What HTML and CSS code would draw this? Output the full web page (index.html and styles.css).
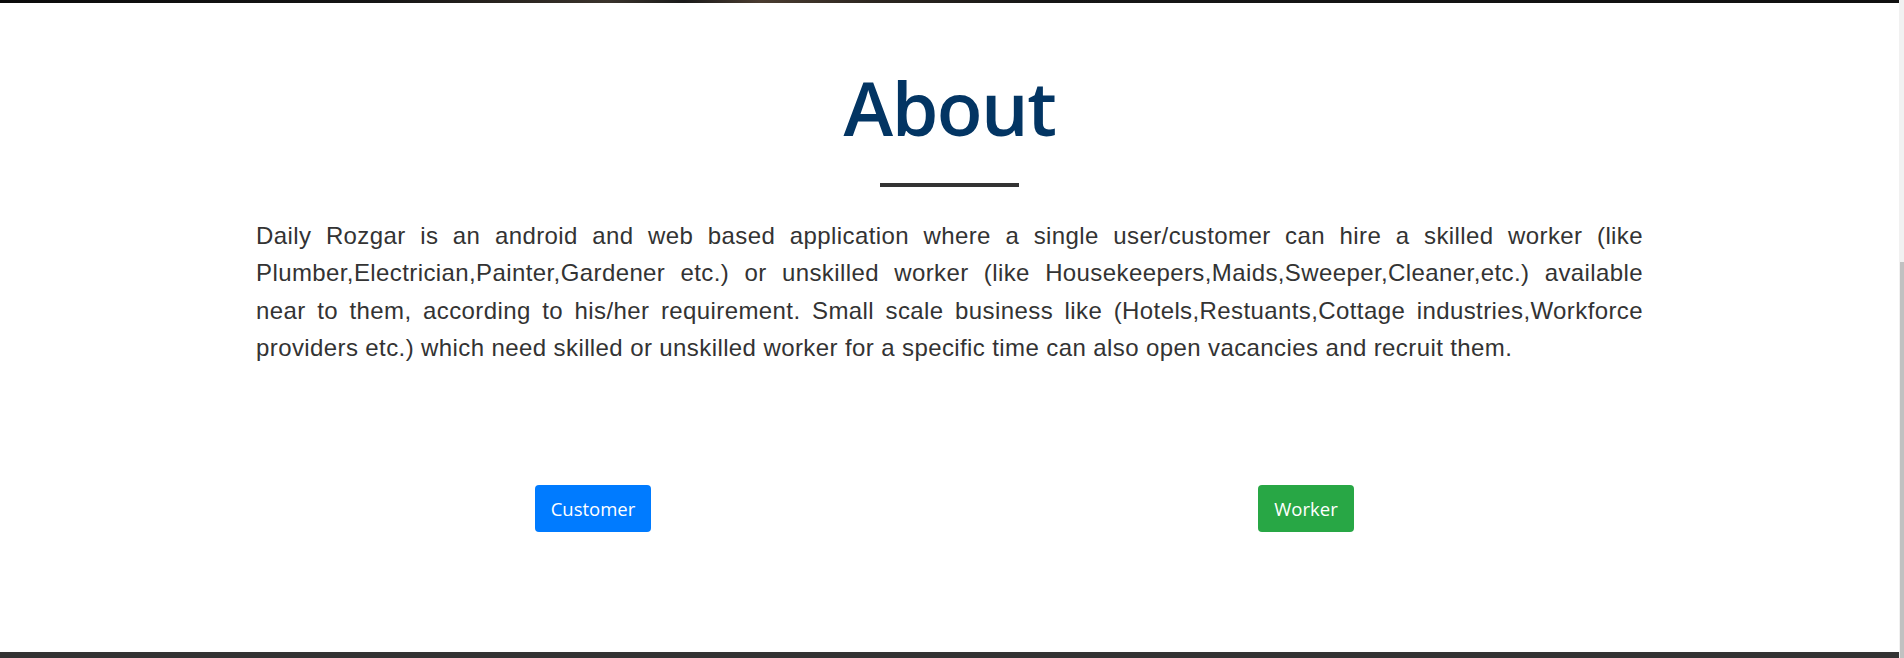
FILE: index.html
```html
<!DOCTYPE html>
<html lang="en">
<head>
<meta charset="utf-8">
<title>About - Daily Rozgar</title>
<link rel="stylesheet" href="styles.css">
</head>
<body>
<div class="frame">
  <div class="page">
    <div class="hero-edge"></div>
    <main class="about">
      <h1 class="about-title">About</h1>
      <div class="about-rule"></div>
      <p class="about-text"><span class="line">Daily Rozgar is an android and web based application where a single user/customer can hire a skilled worker (like</span> <span class="line">Plumber,Electrician,Painter,Gardener etc.) or unskilled worker (like Housekeepers,Maids,Sweeper,Cleaner,etc.) available</span> <span class="line">near to them, according to his/her requirement. Small scale business like (Hotels,Restuants,Cottage industries,Workforce</span> <span class="line line-last">providers etc.) which need skilled or unskilled worker for a specific time can also open vacancies and recruit them.</span></p>
      <div class="actions">
        <div class="action-cell"><a class="btn btn-blue" href="#">Customer</a></div>
        <div class="action-cell"><a class="btn btn-green" href="#">Worker</a></div>
      </div>
    </main>
    <footer class="footer-edge"></footer>
  </div>
  <div class="scrollbar"><div class="scroll-thumb"></div></div>
</div>
</body>
</html>
```
FILE: styles.css
```css
* { box-sizing: border-box; }
html, body { margin: 0; padding: 0; background: #fff; }
body { overflow: hidden; }

.frame {
  display: flex;
  height: 658px;
  width: 1904px;
}

.page {
  flex: 1;
  display: flex;
  flex-direction: column;
  background: #fff;
}

.hero-edge {
  height: 3px;
  background: linear-gradient(90deg, #0b0b0b 0%, #151515 20%, #2a2520 27%, #3a332c 32%, #1a1a1a 36%, #4a3c30 40%, #2c2620 46%, #161616 55%, #101010 100%);
}

.about {
  flex: 1;
  display: flex;
  flex-direction: column;
  align-items: center;
}

.about-title {
  margin: 59px 0 0;
  font-family: "Open Sans", "Noto Sans", sans-serif;
  font-weight: 600;
  font-size: 75px;
  line-height: 91px;
  letter-spacing: -1.5px;
  color: #033563;
}

.about-rule {
  width: 139px;
  height: 4px;
  margin-top: 30px;
  background: #333;
}

.about-text {
  width: 1387px;
  margin: 30px 0 0;
  font-family: "Liberation Sans", Arial, sans-serif;
  font-size: 24px;
  letter-spacing: 0.4px;
  line-height: 37.4px;
  color: #333;
  text-align: justify;
}

.line {
  display: block;
  white-space: nowrap;
  text-align: justify;
  text-align-last: justify;
}

.line-last {
  text-align-last: left;
}

.actions {
  width: 1426px;
  display: flex;
  margin-top: 118px;
}

.action-cell {
  flex: 1;
  display: flex;
  justify-content: center;
}

.btn {
  display: inline-block;
  height: 47px;
  padding: 0 16px;
  border-radius: 4px;
  font-family: "Open Sans", "Noto Sans", sans-serif;
  font-size: 18.5px;
  line-height: 47px;
  color: #fff;
  text-decoration: none;
}

.btn-blue { background: #007bff; }
.btn-green { background: #28a745; }

.footer-edge {
  height: 6px;
  background: #333;
}

.scrollbar {
  width: 5px;
  background: #f1f1f1;
  display: flex;
  flex-direction: column;
  justify-content: flex-end;
  align-items: flex-end;
}

.scroll-thumb {
  width: 4px;
  height: 396px;
  background: #c1c1c1;
}
```
